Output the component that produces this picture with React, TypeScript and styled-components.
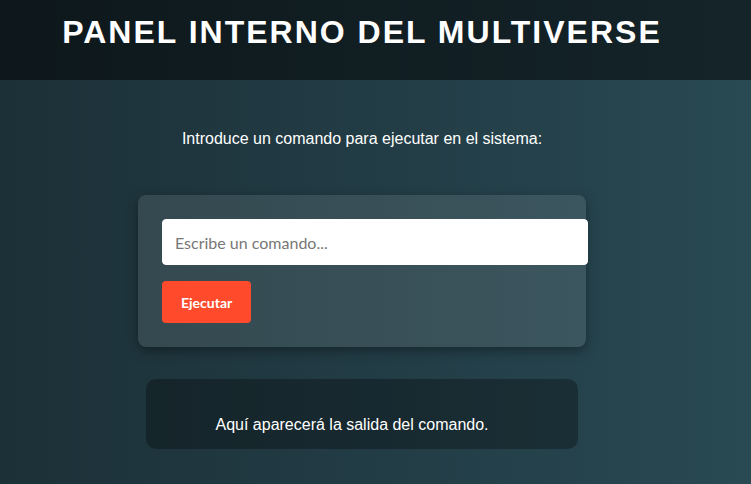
import React, { useState } from 'react';
import styled, { createGlobalStyle } from 'styled-components';

const GlobalStyle = createGlobalStyle`
  html, body {
    margin: 0;
    padding: 0;
  }

  body {
    min-height: 484px;
    font-family: 'Liberation Sans', Arial, sans-serif;
    color: #ffffff;
    background: linear-gradient(to right, #1c3037, #223c45 50%, #294953);
  }
`;

const Header = styled.header`
  height: 80px;
  box-sizing: border-box;
  padding-top: 14px;
  background: rgba(0, 0, 0, 0.5);
`;

const Title = styled.h1`
  width: 724px;
  margin: 0;
  font-size: 32px;
  font-weight: bold;
  letter-spacing: 2px;
  text-align: center;
  text-transform: uppercase;
`;

const Main = styled.main`
  width: 724px;
  display: flex;
  flex-direction: column;
  align-items: center;
`;

const Intro = styled.p`
  margin: 49px 0 0;
  font-size: 16px;
  line-height: 20px;
`;

const Card = styled.form`
  width: 400px;
  margin-top: 46px;
  padding: 24px;
  display: flex;
  flex-direction: column;
  align-items: flex-start;
  gap: 16px;
  border-radius: 8px;
  background: rgba(255, 255, 255, 0.1);
  box-shadow: 0 4px 12px rgba(0, 0, 0, 0.35);
`;

const CommandInput = styled.input`
  width: 100%;
  height: 20px;
  margin: 0;
  padding: 12px;
  border: 1px solid #ffffff;
  border-radius: 4px;
  background: #ffffff;
  font-family: Lato, 'Noto Sans', sans-serif;
  font-size: 16px;
  color: #222222;
  outline: none;

  &::placeholder {
    color: #777777;
  }
`;

const RunButton = styled.button`
  height: 42px;
  padding: 0 19px;
  border: none;
  border-radius: 4px;
  background: #ff4b2b;
  color: #ffffff;
  font-family: Lato, 'Noto Sans', sans-serif;
  font-size: 14px;
  font-weight: bold;
  cursor: pointer;
`;

const Output = styled.div`
  width: 432px;
  box-sizing: border-box;
  margin-top: 32px;
  padding: 36px 30px 14px 10px;
  border-radius: 10px;
  background: rgba(0, 0, 0, 0.3);
  text-align: center;
  font-size: 16px;
  line-height: 20px;
`;

export default function App() {
  const [command, setCommand] = useState('');

  return (
    <>
      <GlobalStyle />
      <Header>
        <Title>Panel Interno del Multiverse</Title>
      </Header>
      <Main>
        <Intro>Introduce un comando para ejecutar en el sistema:</Intro>
        <Card onSubmit={(e) => e.preventDefault()}>
          <CommandInput
            type="text"
            placeholder="Escribe un comando..."
            value={command}
            onChange={(e) => setCommand(e.target.value)}
          />
          <RunButton type="submit">Ejecutar</RunButton>
        </Card>
        <Output>Aquí aparecerá la salida del comando.</Output>
      </Main>
    </>
  );
}
